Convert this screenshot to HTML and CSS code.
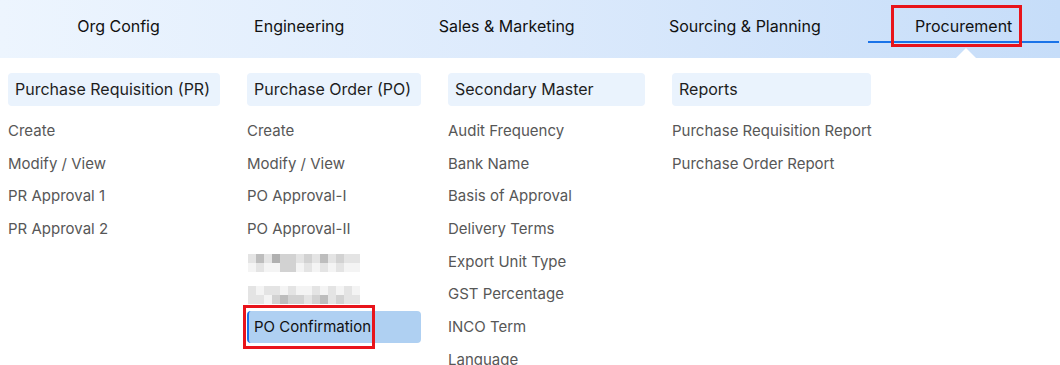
FILE: index.html
```html
<!DOCTYPE html>
<html lang="en">
<head>
<meta charset="utf-8">
<title>Procurement Menu</title>
<link rel="stylesheet" href="styles.css">
</head>
<body>
<header class="nav">
  <ul class="nav-list">
    <li class="nav-item">Org Config</li>
    <li class="nav-item">Engineering</li>
    <li class="nav-item">Sales &amp; Marketing</li>
    <li class="nav-item">Sourcing &amp; Planning</li>
    <li class="nav-item active">Procurement<span class="annot annot-nav"></span></li>
  </ul>
</header>
<main class="menu">
  <section class="col col-pr">
    <h3 class="col-head">Purchase Requisition (PR)</h3>
    <ul class="items">
      <li class="item">Create</li>
      <li class="item">Modify / View</li>
      <li class="item">PR Approval 1</li>
      <li class="item">PR Approval 2</li>
    </ul>
  </section>
  <section class="col col-po">
    <h3 class="col-head">Purchase Order (PO)</h3>
    <ul class="items">
      <li class="item">Create</li>
      <li class="item">Modify / View</li>
      <li class="item">PO Approval-I</li>
      <li class="item">PO Approval-II</li>
      <li class="item blurred">
        <div class="mosaic">
          <i class="c1"></i><i class="c3"></i><i class="c1"></i><i class="c4"></i><i class="c2"></i><i class="c2"></i><i class="c1"></i><i class="c2"></i><i class="c1"></i><i class="c3"></i><i class="c1"></i><i class="c2"></i><i class="c1"></i><i class="c1"></i>
          <i class="c0"></i><i class="c1"></i><i class="c0"></i><i class="c0"></i><i class="c2"></i><i class="c2"></i><i class="c0"></i><i class="c1"></i><i class="c0"></i><i class="c1"></i><i class="c0"></i><i class="c1"></i><i class="c0"></i><i class="c0"></i>
        </div>
      </li>
      <li class="item blurred">
        <div class="mosaic">
          <i class="c1"></i><i class="c0"></i><i class="c1"></i><i class="c1"></i><i class="c0"></i><i class="c1"></i><i class="c0"></i><i class="c0"></i><i class="c1"></i><i class="c0"></i><i class="c1"></i><i class="c0"></i><i class="c1"></i><i class="c0"></i>
          <i class="c1"></i><i class="c1"></i><i class="c0"></i><i class="c2"></i><i class="c3"></i><i class="c2"></i><i class="c2"></i><i class="c1"></i><i class="c2"></i><i class="c3"></i><i class="c1"></i><i class="c2"></i><i class="c1"></i><i class="c1"></i>
        </div>
      </li>
      <li class="item selected">PO Confirmation<span class="annot annot-item"></span></li>
    </ul>
  </section>
  <section class="col col-sm">
    <h3 class="col-head">Secondary Master</h3>
    <ul class="items">
      <li class="item">Audit Frequency</li>
      <li class="item">Bank Name</li>
      <li class="item">Basis of Approval</li>
      <li class="item">Delivery Terms</li>
      <li class="item">Export Unit Type</li>
      <li class="item">GST Percentage</li>
      <li class="item">INCO Term</li>
      <li class="item">Language</li>
    </ul>
  </section>
  <section class="col col-rp">
    <h3 class="col-head">Reports</h3>
    <ul class="items">
      <li class="item">Purchase Requisition Report</li>
      <li class="item">Purchase Order Report</li>
    </ul>
  </section>
</main>
</body>
</html>
```
FILE: styles.css
```css
* { box-sizing: border-box; }
html, body {
  margin: 0;
  padding: 0;
  background: #ffffff;
  font-family: Inter, "Noto Sans", "Liberation Sans", sans-serif;
  overflow: hidden;
}
.nav {
  height: 58px;
  background: linear-gradient(to right, #edf5fe 0%, #dceafc 50%, #c6ddf9 100%);
}
.nav-list {
  list-style: none;
  margin: 0;
  padding: 0 0 0 30px;
  display: flex;
  align-items: flex-start;
}
.nav-item {
  position: relative;
  padding: 16px 47.15px 5px;
  line-height: 20px;
  font-size: 16px;
  color: #111111;
  white-space: nowrap;
  border-bottom: 2px solid transparent;
}
.nav-item.active {
  border-bottom-color: #1a73e8;
}
.nav-item.active::after {
  content: "";
  position: absolute;
  top: 48px;
  left: 50%;
  margin-left: -8px;
  border-left: 10px solid transparent;
  border-right: 10px solid transparent;
  border-bottom: 10px solid #ffffff;
}
.annot {
  position: absolute;
  border: 3px solid #e8141b;
  pointer-events: none;
}
.annot-nav {
  left: 23px;
  top: 5px;
  width: 131px;
  height: 42px;
}
.menu {
  display: flex;
  gap: 27px;
  padding: 15px 8px 0;
}
.col-pr { width: 212px; }
.col-po { width: 174px; }
.col-sm { width: 197px; }
.col-rp { width: 199px; }
.col-head {
  margin: 0;
  height: 33px;
  line-height: 33px;
  padding: 0 7px;
  background: #eaf3fd;
  border-radius: 4px;
  font-size: 16px;
  font-weight: 400;
  color: #1e1e1e;
  white-space: nowrap;
}
.items {
  list-style: none;
  margin: 9px 0 0;
  padding: 0;
}
.item {
  position: relative;
  height: 32.7px;
  line-height: 32.7px;
  font-size: 15px;
  color: #575757;
  white-space: nowrap;
}
.item.blurred {
  padding-top: 8px;
}
.item.selected {
  background: #afd0f2;
  color: #111111;
  padding-left: 5px;
  border-left: 2px solid #1a73e8;
  border-radius: 4px;
  height: 32px;
  line-height: 32px;
}
.annot-item {
  left: -6px;
  top: -6px;
  width: 132px;
  height: 44px;
}
.mosaic {
  display: grid;
  grid-template-columns: repeat(14, 8px);
  grid-auto-rows: 9px;
  margin-left: 1px;
}
.mosaic i { display: block; }
.c0 { background: #f4f4f4; }
.c1 { background: #e4e4e4; }
.c2 { background: #d2d2d2; }
.c3 { background: #bdbdbd; }
.c4 { background: #b0b0b0; }
```
